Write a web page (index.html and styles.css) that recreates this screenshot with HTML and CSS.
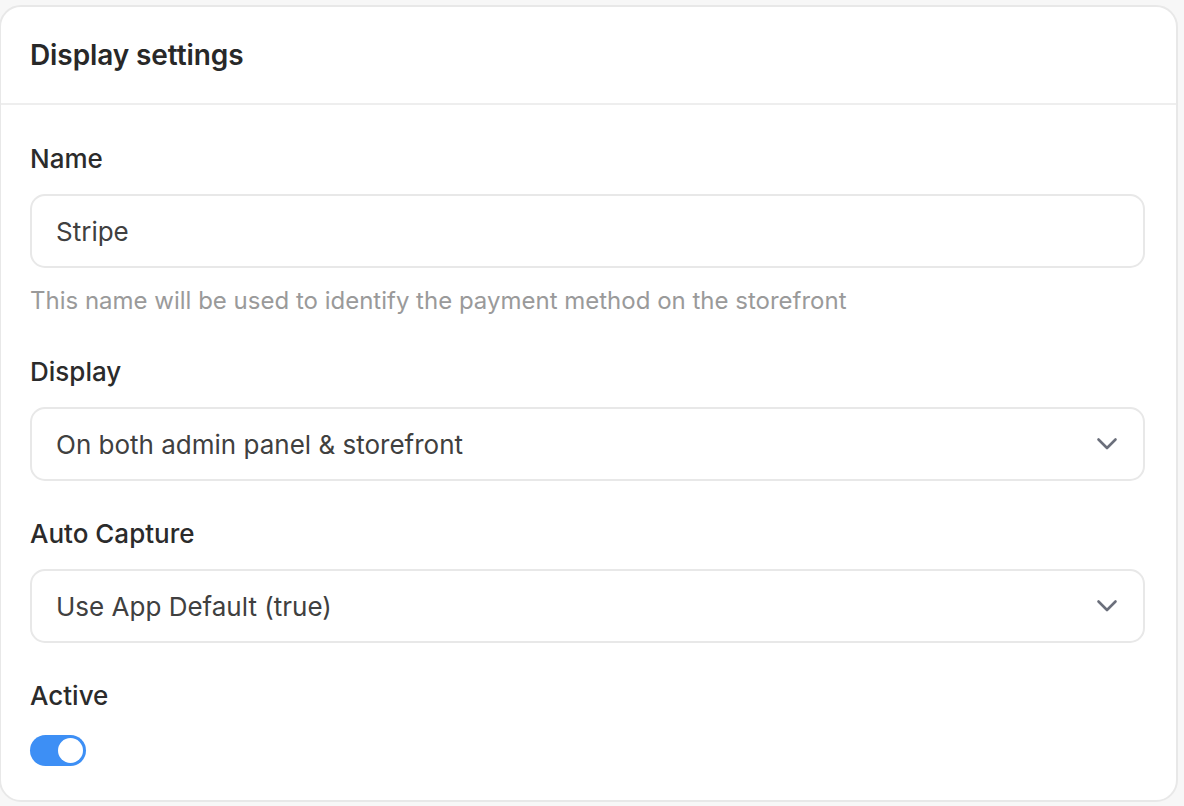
FILE: index.html
```html
<!DOCTYPE html>
<html lang="en">
<head>
<meta charset="utf-8">
<title>Display settings</title>
<link rel="stylesheet" href="styles.css">
</head>
<body>
<div class="page">
  <section class="card">
    <header class="card-header">
      <h2 class="card-title">Display settings</h2>
    </header>
    <div class="card-body">
      <div class="field">
        <label class="label">Name</label>
        <div class="control">Stripe</div>
        <p class="help">This name will be used to identify the payment method on the storefront</p>
      </div>
      <div class="field">
        <label class="label">Display</label>
        <div class="control select">
          <span>On both admin panel &amp; storefront</span>
          <svg class="chevron" viewBox="0 0 22 22" width="22" height="22"><path d="M2.5 6.5l8.5 8.5 8.5-8.5" fill="none" stroke="currentColor" stroke-width="2.6" stroke-linecap="round" stroke-linejoin="round"/></svg>
        </div>
      </div>
      <div class="field">
        <label class="label">Auto Capture</label>
        <div class="control select">
          <span>Use App Default (true)</span>
          <svg class="chevron" viewBox="0 0 22 22" width="22" height="22"><path d="M2.5 6.5l8.5 8.5 8.5-8.5" fill="none" stroke="currentColor" stroke-width="2.6" stroke-linecap="round" stroke-linejoin="round"/></svg>
        </div>
      </div>
      <div class="field">
        <label class="label">Active</label>
        <div class="toggle"><span class="knob"></span></div>
      </div>
    </div>
  </section>
</div>
</body>
</html>
```
FILE: styles.css
```css
* { box-sizing: border-box; }
html, body {
  margin: 0;
  padding: 0;
  background: #f7f7f7;
  font-family: Inter, "Noto Sans", sans-serif;
  color: #2b2b2b;
}
.page {
  height: 806px;
  padding: 5px 6px 0 0;
  overflow: hidden;
}
.card {
  margin-left: -1px;
  background: #ffffff;
  border: 2px solid #e8e8e8;
  border-radius: 22px;
  height: 797px;
}
.card-header {
  height: 98px;
  border-bottom: 2px solid #eeeeee;
  display: flex;
  align-items: center;
  padding: 0 29px;
}
.card-title {
  margin: 0;
  font-size: 28px;
  font-weight: 600;
  color: #282828;
  letter-spacing: -0.1px;
}
.card-body {
  padding: 38px 31px 0 29px;
  display: flex;
  flex-direction: column;
}
.field {
  display: flex;
  flex-direction: column;
  margin-bottom: 37px;
}
.label {
  font-size: 26px;
  font-weight: 500;
  line-height: 32px;
  color: #2b2b2b;
  margin-bottom: 19px;
}
.control {
  height: 74px;
  border: 2px solid #e8e8e8;
  border-radius: 15px;
  padding: 0 24px;
  display: flex;
  align-items: center;
  font-size: 26px;
  color: #404040;
}
.select {
  justify-content: space-between;
  padding-right: 25px;
}
.chevron {
  color: #6b6f7b;
}
.help {
  margin: 18px 0 3px 0;
  font-size: 24px;
  line-height: 30px;
  color: #9a9a9a;
}
.toggle {
  width: 56px;
  height: 31px;
  border-radius: 16px;
  background: #3d8ff5;
  display: flex;
  align-items: center;
  justify-content: flex-end;
  padding: 0 3px;
  margin-top: 4px;
}
.knob {
  width: 25px;
  height: 25px;
  border-radius: 50%;
  background: #ffffff;
}
```
